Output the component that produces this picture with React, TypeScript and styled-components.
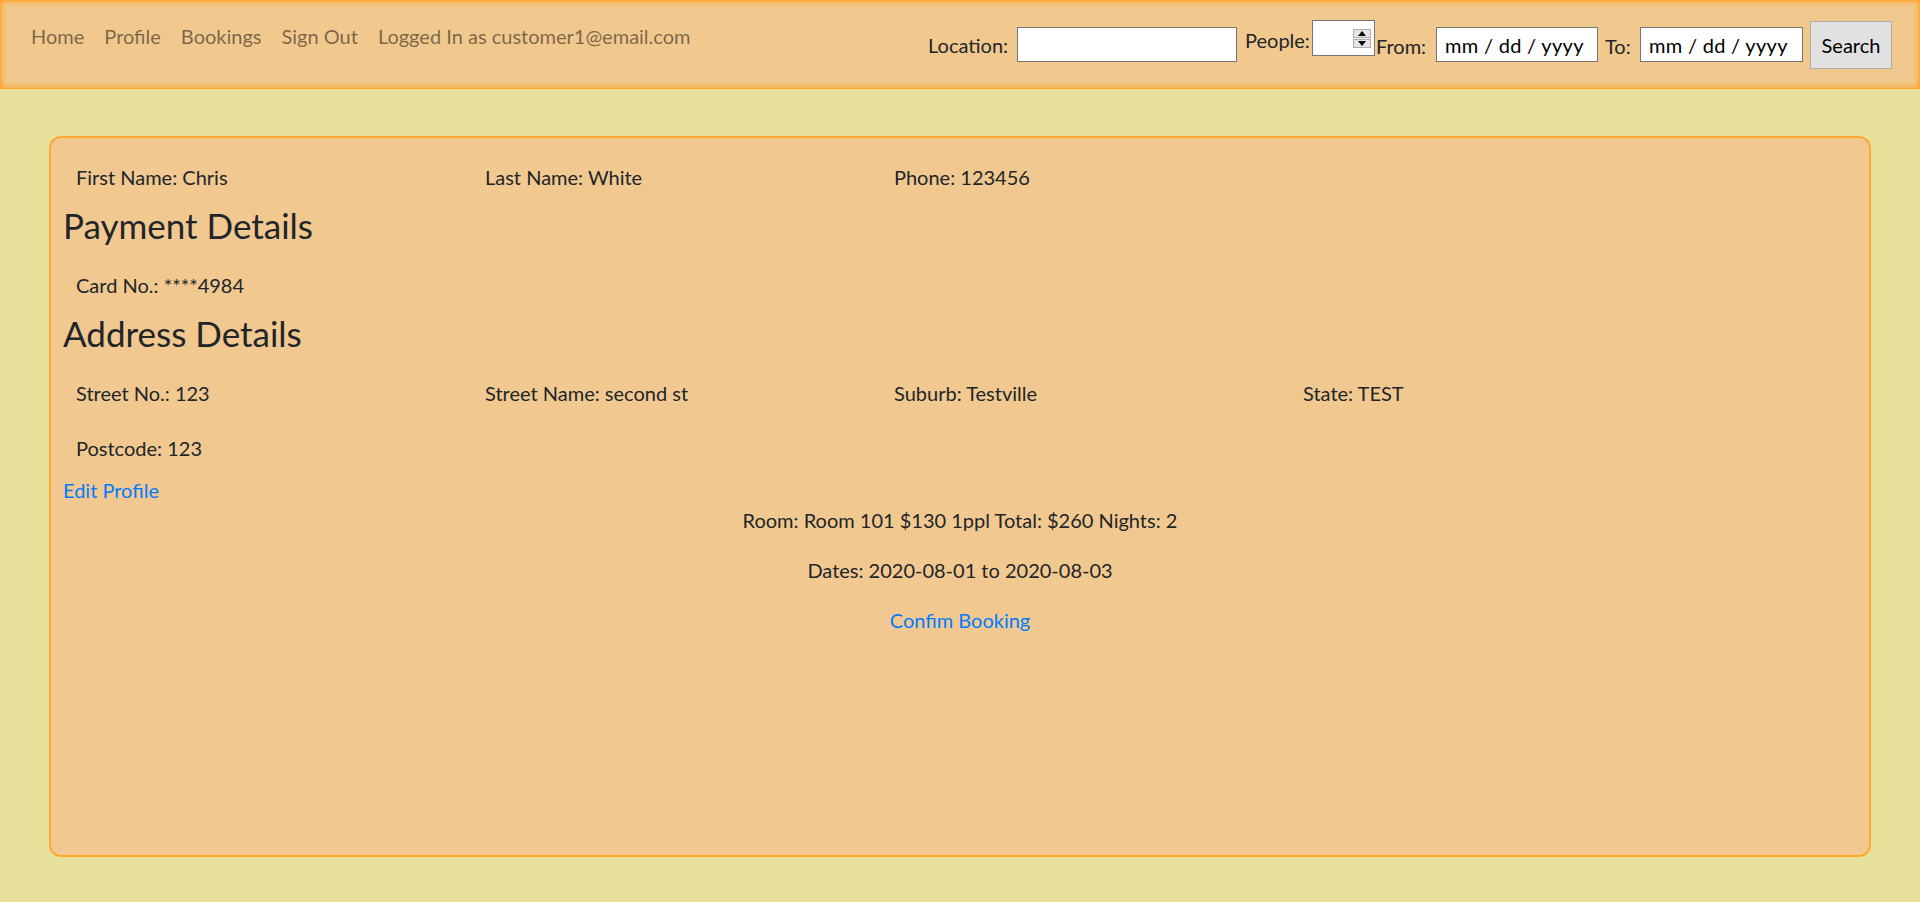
import React from "react";
import styled, { createGlobalStyle } from "styled-components";

const FONT = `Lato, "Open Sans", "Liberation Sans", sans-serif`;

const Global = createGlobalStyle`
  html, body {
    margin: 0;
    padding: 0;
    background: #e8e19b;
    font-family: ${FONT};
    font-size: 20px;
    line-height: 1.5;
    color: #212529;
  }
  * { box-sizing: border-box; }
`;

const Page = styled.div`
  min-height: 902px;
  display: flex;
  flex-direction: column;
`;

const NavBar = styled.nav`
  height: 89px;
  display: flex;
  align-items: flex-start;
  padding: 11px 27px 0 20px;
  background: #f1c98f;
  border: 1px solid #ffa733;
  box-shadow: inset 0 0 6px 1px #ffa733;
`;

const NavLinks = styled.div`
  display: flex;
`;

const NavLink = styled.a`
  display: block;
  padding: 9px 10px 11px;
  line-height: 30px;
  color: rgba(0, 0, 0, 0.5);
  text-decoration: none;
  white-space: nowrap;
`;

const SearchForm = styled.form`
  margin-left: auto;
  display: flex;
  align-items: flex-start;
`;

const Label = styled.label<{ $w: number; $mt: number; $ml?: number }>`
  width: ${(p) => p.$w}px;
  margin-top: ${(p) => p.$mt}px;
  margin-left: ${(p) => p.$ml ?? 0}px;
  line-height: 30px;
  white-space: nowrap;
  color: #212529;
`;

const TextInput = styled.input<{ $w: number }>`
  width: ${(p) => p.$w}px;
  height: 35px;
  margin-top: 15px;
  border: 1px solid #767676;
  background: #fff;
  padding: 1px 8px;
  font-family: ${FONT};
  font-size: 20px;
  color: #000;
  outline: none;
  &::placeholder {
    color: #000;
    opacity: 1;
    letter-spacing: 0.3px;
  }
`;

const NumberBox = styled.div`
  width: 63px;
  height: 36px;
  margin-top: 8px;
  border: 1px solid #767676;
  background: #fff;
  display: flex;
  justify-content: flex-end;
  align-items: center;
  padding-right: 3px;
`;

const Spinner = styled.div`
  width: 18px;
  height: 19px;
  display: flex;
  flex-direction: column;
  gap: 1px;
  background: #f0f0f0;
`;

const SpinBtn = styled.div`
  flex: 1;
  border: 1px solid #adadad;
  background: #e5e5e5;
  display: flex;
  align-items: center;
  justify-content: center;
`;

const SearchButton = styled.button`
  width: 82px;
  height: 48px;
  margin-top: 9px;
  margin-left: 7px;
  border: 1px solid #adadad;
  background: #e1e1e1;
  font-family: ${FONT};
  font-size: 20px;
  color: #000;
  padding: 0;
`;

const Main = styled.main`
  padding: 47px 49px 45px 49px;
`;

const Card = styled.section`
  height: 721px;
  background: #f1c990;
  border: 2px solid #ffa733;
  border-radius: 12px;
  padding: 11px 12px 12px;
`;

const InfoGrid = styled.div`
  display: grid;
  grid-template-columns: repeat(4, 409px);
`;

const Info = styled.div`
  padding: 13px 13px 12px;
  line-height: 30px;
  white-space: nowrap;
`;

const Heading = styled.h3`
  margin: 0 0 11px;
  font-size: 35px;
  font-weight: 400;
  line-height: 42px;
`;

const Link = styled.a<{ $center?: boolean }>`
  display: block;
  color: #007bff;
  text-decoration: none;
  line-height: 30px;
  text-align: ${(p) => (p.$center ? "center" : "left")};
`;

const Summary = styled.p`
  margin: 0 0 20px;
  text-align: center;
  line-height: 30px;
`;

const Tri = ({ up }: { up?: boolean }) => (
  <svg width="8" height="5" viewBox="0 0 8 5">
    <path d={up ? "M0 5 L4 0 L8 5 Z" : "M0 0 L8 0 L4 5 Z"} fill="#000" />
  </svg>
);

export default function App() {
  return (
    <Page>
      <Global />
      <NavBar>
        <NavLinks>
          <NavLink href="#">Home</NavLink>
          <NavLink href="#">Profile</NavLink>
          <NavLink href="#">Bookings</NavLink>
          <NavLink href="#">Sign Out</NavLink>
          <NavLink href="#">Logged In as customer1@email.com</NavLink>
        </NavLinks>
        <SearchForm onSubmit={(e) => e.preventDefault()}>
          <Label $w={89} $mt={18}>Location:</Label>
          <TextInput $w={220} type="text" />
          <Label $w={67} $mt={13} $ml={8}>People:</Label>
          <NumberBox>
            <Spinner>
              <SpinBtn><Tri up /></SpinBtn>
              <SpinBtn><Tri /></SpinBtn>
            </Spinner>
          </NumberBox>
          <Label $w={60} $mt={19} $ml={1}>From:</Label>
          <TextInput $w={162} type="text" placeholder="mm / dd / yyyy" />
          <Label $w={35} $mt={19} $ml={7}>To:</Label>
          <TextInput $w={163} type="text" placeholder="mm / dd / yyyy" />
          <SearchButton type="submit">Search</SearchButton>
        </SearchForm>
      </NavBar>
      <Main>
        <Card>
          <InfoGrid>
            <Info>First Name: Chris</Info>
            <Info>Last Name: White</Info>
            <Info>Phone: 123456</Info>
          </InfoGrid>
          <Heading>Payment Details</Heading>
          <InfoGrid>
            <Info>Card No.: ****4984</Info>
          </InfoGrid>
          <Heading>Address Details</Heading>
          <InfoGrid>
            <Info>Street No.: 123</Info>
            <Info>Street Name: second st</Info>
            <Info>Suburb: Testville</Info>
            <Info>State: TEST</Info>
            <Info>Postcode: 123</Info>
          </InfoGrid>
          <Link href="#">Edit Profile</Link>
          <Summary>Room: Room 101 $130 1ppl Total: $260 Nights: 2</Summary>
          <Summary>Dates: 2020-08-01 to 2020-08-03</Summary>
          <Link href="#" $center>Confim Booking</Link>
        </Card>
      </Main>
    </Page>
  );
}
